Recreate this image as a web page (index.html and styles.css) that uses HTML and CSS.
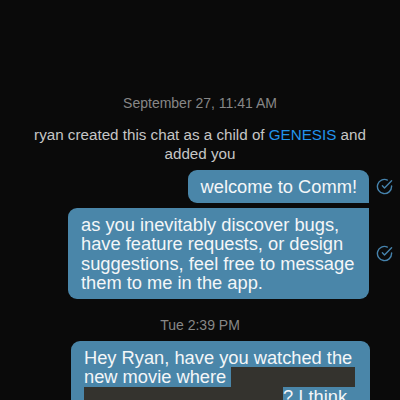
FILE: index.html
```html
<!DOCTYPE html>
<html lang="en">
<head>
<meta charset="utf-8">
<title>Comm chat</title>
<link rel="stylesheet" href="styles.css">
</head>
<body>
<div class="chat">
  <div class="time time-first">September 27, 11:41 AM</div>
  <div class="system">ryan created this chat as a child of <span class="link">GENESIS</span> and added you</div>

  <div class="row">
    <div class="bubble b-first">welcome to Comm!</div>
    <svg class="check" viewBox="0 0 24 24" fill="none" stroke="currentColor" stroke-width="2" stroke-linecap="round" stroke-linejoin="round"><path d="M22 11.08V12a10 10 0 1 1-5.93-9.14"/><polyline points="22 4 12 14.01 9 11.01"/></svg>
  </div>
  <div class="row row-next">
    <div class="bubble b-last">as you inevitably discover bugs, have feature requests, or design suggestions, feel free to message them to me in the app.</div>
    <svg class="check" viewBox="0 0 24 24" fill="none" stroke="currentColor" stroke-width="2" stroke-linecap="round" stroke-linejoin="round"><path d="M22 11.08V12a10 10 0 1 1-5.93-9.14"/><polyline points="22 4 12 14.01 9 11.01"/></svg>
  </div>

  <div class="time time-second">Tue 2:39 PM</div>
  <div class="row row-third">
    <div class="bubble b-single">Hey Ryan, have you watched the new movie where <span class="redact redact-a"></span><span class="redact redact-b"></span>? I think you would really like it.</div>
  </div>
</div>
</body>
</html>
```
FILE: styles.css
```css
html, body {
  margin: 0;
  padding: 0;
  background: #0a0a0a;
  height: 100%;
  overflow: hidden;
}

body {
  font-family: "Liberation Sans", Arial, sans-serif;
}

.chat {
  display: flex;
  flex-direction: column;
  padding-top: 95px;
}

.time {
  font-size: 14px;
  line-height: 17px;
  color: #878787;
  text-align: center;
}

.time-first {
  margin-bottom: 13px;
}

.time-second {
  margin-top: 18px;
  margin-bottom: 7px;
}

.system {
  font-size: 15.2px;
  line-height: 19px;
  color: #c6c6c6;
  text-align: center;
  padding: 0 30px;
  margin-bottom: 7px;
}

.link {
  color: #2293ec;
}

.row {
  display: flex;
  justify-content: flex-end;
  align-items: center;
  gap: 7px;
  padding-right: 7px;
}

.row-next {
  margin-top: 5px;
}

.row-third {
  padding-right: 30px;
}

.bubble {
  background: #4a86a9;
  color: #f4f6f8;
  font-size: 18.3px;
  line-height: 19.5px;
  padding: 7px 12px 6px 13px;
  border-radius: 9px;
  max-width: 276px;
}

.b-first {
  border-bottom-right-radius: 0;
}

.b-last {
  border-top-right-radius: 0;
}

.b-single {
  max-width: 274px;
}

.check {
  width: 17px;
  height: 17px;
  color: #4683ad;
  flex: none;
}

.redact {
  display: inline-block;
  height: 19.5px;
  vertical-align: top;
  background: #34332e;
}

.redact-a {
  width: 124px;
}

.redact-b {
  width: 199px;
}
```
